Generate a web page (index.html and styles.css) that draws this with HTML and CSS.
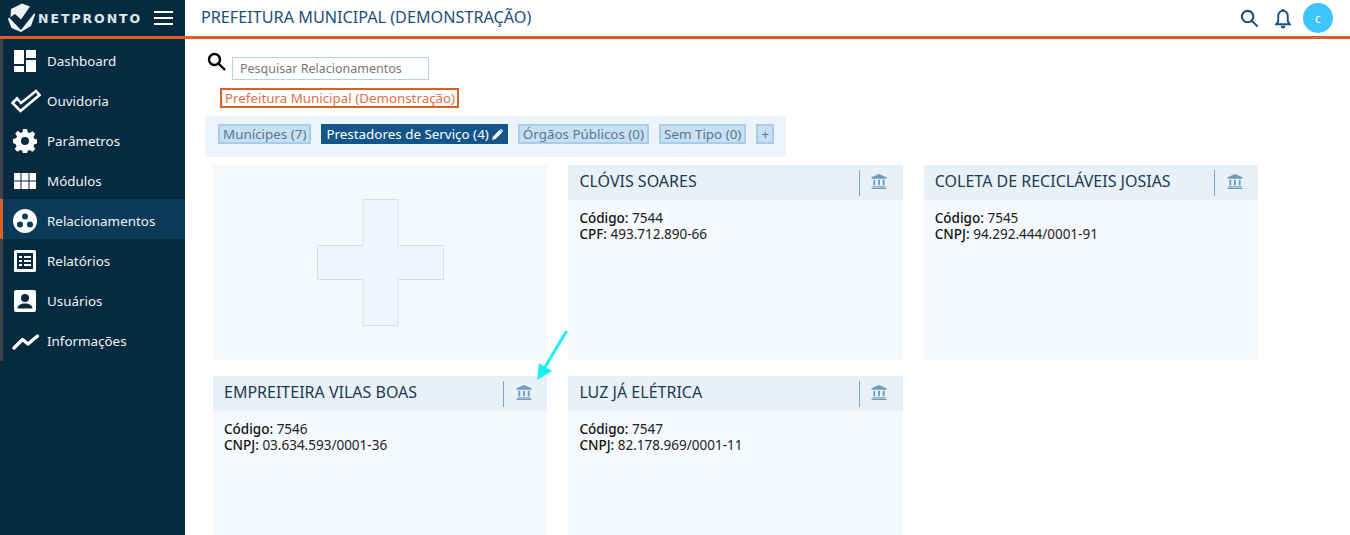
FILE: index.html
```html
<!DOCTYPE html>
<html lang="pt-BR">
<head>
<meta charset="utf-8">
<title>Netpronto</title>
<link rel="stylesheet" href="styles.css">
</head>
<body>
<header class="topbar">
  <div class="brand">
    <svg class="logo" width="28" height="29" viewBox="0 0 28 29"><path d="M3 6 L14 0.500 L22 3.500 L13 16.500 L7 11 L2.500 14 Z" fill="#eef2f2"/><path d="M1 14.500 L13 27 L26.500 10 L27 12 L23 23 L13 29 L3.500 25 L0 16 Z" fill="#eef2f2"/></svg>
    <span class="wordmark">NETPRONTO</span>
    <span class="burger"><i></i><i></i><i></i></span>
  </div>
  <div class="topmain">
    <h1>PREFEITURA MUNICIPAL (DEMONSTRAÇÃO)</h1>
    <div class="tools">
      <svg class="tool-search" width="19" height="19" viewBox="0 0 20 20" fill="none" stroke="#1d4f7c" stroke-width="2.200"><circle cx="8" cy="8" r="6"/><path d="M12.500 12.500 L18.500 18.500"/></svg>
      <svg width="18" height="21" viewBox="0 0 18 22"><path d="M9 3 C5.500 3 4 6 4 9 V14 L2 17 H16 L14 14 V9 C14 6 12.500 3 9 3 Z" fill="none" stroke="#1d4f7c" stroke-width="2"/><path d="M7.500 3 a1.500 1.500 0 0 1 3 0 M7 19 h4 a2 2 0 0 1 -4 0" fill="#1d4f7c" stroke="#1d4f7c"/></svg>
      <span class="avatar">c</span>
    </div>
  </div>
</header>
<div class="layout">
  <nav class="sidebar">
    <ul class="menu">
      <li class="item"><svg class="ico" viewBox="0 0 24 24" fill="#fff"><path d="M1 1h10v14H1zM13 1h10v8H13zM13 11h10v12H13zM1 17h10v6H1z"/></svg>Dashboard</li>
      <li class="item"><svg class="ico wide" viewBox="0 0 30 24" fill="none" stroke="#fff" stroke-width="2.600"><path d="M1.500 14 L6 9.500 L10 14 L25 2 L28.500 6 L9.500 22 Z"/></svg>Ouvidoria</li>
      <li class="item"><svg class="ico" viewBox="0 0 24 24"><path fill="#fff" fill-rule="evenodd" d="M10 0h4l.7 3.200 2 .8 2.800-1.800 2.800 2.800-1.800 2.800.8 2 3.200.7v4l-3.200.7-.8 2 1.800 2.800-2.800 2.800-2.800-1.800-2 .8-.7 3.200h-4l-.7-3.200-2-.8-2.800 1.800-2.800-2.800 1.800-2.800-.8-2L0 14v-4l3.200-.7.8-2L2.200 4.500 5 1.700 7.500 4l2-.8zM12 8a4 4 0 1 0 0 8 4 4 0 0 0 0-8z"/></svg>Parâmetros</li>
      <li class="item"><svg class="ico" viewBox="0 0 24 24" fill="#fff"><path d="M1 4h6.500v7.500H1zM8.500 4h7v7.500h-7zM16.500 4H23v7.500h-6.500zM1 12.500h6.500V20H1zM8.500 12.500h7V20h-7zM16.500 12.500H23V20h-6.500z"/></svg>Módulos</li>
      <li class="item active"><svg class="ico" viewBox="0 0 24 24"><circle cx="12" cy="12" r="12" fill="#fff"/><circle cx="12" cy="7.500" r="3" fill="#0a3a58"/><circle cx="7" cy="15.500" r="3" fill="#0a3a58"/><circle cx="17" cy="15.500" r="3" fill="#0a3a58"/></svg>Relacionamentos</li>
      <li class="item"><svg class="ico" viewBox="0 0 24 24"><rect x="1" y="1" width="22" height="22" rx="1.500" fill="#fff"/><path fill="#062a40" d="M4 4h16v16H4z"/><path fill="#fff" d="M6 7h3v2H6zM11 7h7v2h-7zM6 11h3v2H6zM11 11h7v2h-7zM6 15h3v2H6zM11 15h7v2h-7z"/></svg>Relatórios</li>
      <li class="item"><svg class="ico" viewBox="0 0 24 24"><rect x="1" y="1" width="22" height="22" rx="2" fill="#fff"/><circle cx="12" cy="9" r="4" fill="#062a40"/><path fill="#062a40" d="M4.500 19.500c0-3.500 3.500-5 7.500-5s7.500 1.500 7.500 5z"/></svg>Usuários</li>
      <li class="item"><svg class="ico wide" viewBox="0 0 30 24" fill="none" stroke="#fff" stroke-width="3.400" stroke-linecap="round" stroke-linejoin="round"><path d="M3 19 L11.500 10.500 L17 15 L26.500 7"/></svg>Informações</li>
    </ul>
  </nav>
  <main class="content">
    <div class="search">
      <svg width="20" height="20" viewBox="0 0 20 20" fill="none" stroke="#000" stroke-width="2.400"><circle cx="7.500" cy="7.500" r="5.500"/><path d="M11.500 11.500 L18 18"/></svg>
      <div class="search-input">Pesquisar Relacionamentos</div>
    </div>
    <div class="crumb">Prefeitura Municipal (Demonstração)</div>
    <div class="tabs">
      <span class="tab">Munícipes (7)</span>
      <span class="tab current">Prestadores de Serviço (4)<svg width="11" height="11" viewBox="0 0 11 11"><path fill="#fff" d="M0 11 L1 7.500 L7.500 1 L10 3.500 L3.500 10 Z M8.200.4 a1 1 0 0 1 1.300 0 l1.100 1.100 a1 1 0 0 1 0 1.300 l-.3.300 -2.400-2.400z"/></svg></span>
      <span class="tab">Órgãos Públicos (0)</span>
      <span class="tab">Sem Tipo (0)</span>
      <span class="tab plus">+</span>
    </div>
    <div class="grid">
      <div class="card add"><svg width="127" height="127" viewBox="0 0 127 127"><path d="M46 .5 H81 V46.500 H126.500 V80.500 H81 V126.500 H46 V80.500 H.5 V46.500 H46 Z" fill="#f0f5fc" stroke="#d3e0ec"/></svg></div>
      <article class="card">
        <div class="card-head"><h2>CLÓVIS SOARES</h2><span class="bank"><svg width="16" height="15" viewBox="0 0 16 16" fill="#6f9bbd"><path d="M8 0 L16 3.500 V5 H0 V3.500 Z M2 6 H4 V12 H2 Z M7 6 H9 V12 H7 Z M12 6 H14 V12 H12 Z M1 13 H15 V14.500 H1 Z M0 15 H16 V16 H0 Z"/></svg></span></div>
        <div class="card-body"><b>Código:</b> 7544<br><b>CPF:</b> 493.712.890-66</div>
      </article>
      <article class="card">
        <div class="card-head"><h2>COLETA DE RECICLÁVEIS JOSIAS</h2><span class="bank"><svg width="16" height="15" viewBox="0 0 16 16" fill="#6f9bbd"><path d="M8 0 L16 3.500 V5 H0 V3.500 Z M2 6 H4 V12 H2 Z M7 6 H9 V12 H7 Z M12 6 H14 V12 H12 Z M1 13 H15 V14.500 H1 Z M0 15 H16 V16 H0 Z"/></svg></span></div>
        <div class="card-body"><b>Código:</b> 7545<br><b>CNPJ:</b> 94.292.444/0001-91</div>
      </article>
      <article class="card">
        <div class="card-head"><h2>EMPREITEIRA VILAS BOAS</h2><span class="bank"><svg width="16" height="15" viewBox="0 0 16 16" fill="#6f9bbd"><path d="M8 0 L16 3.500 V5 H0 V3.500 Z M2 6 H4 V12 H2 Z M7 6 H9 V12 H7 Z M12 6 H14 V12 H12 Z M1 13 H15 V14.500 H1 Z M0 15 H16 V16 H0 Z"/></svg></span></div>
        <div class="card-body"><b>Código:</b> 7546<br><b>CNPJ:</b> 03.634.593/0001-36</div>
      </article>
      <article class="card">
        <div class="card-head"><h2>LUZ JÁ ELÉTRICA</h2><span class="bank"><svg width="16" height="15" viewBox="0 0 16 16" fill="#6f9bbd"><path d="M8 0 L16 3.500 V5 H0 V3.500 Z M2 6 H4 V12 H2 Z M7 6 H9 V12 H7 Z M12 6 H14 V12 H12 Z M1 13 H15 V14.500 H1 Z M0 15 H16 V16 H0 Z"/></svg></span></div>
        <div class="card-body"><b>Código:</b> 7547<br><b>CNPJ:</b> 82.178.969/0001-11</div>
      </article>
    </div>
    <svg class="arrow" width="36" height="52" viewBox="0 0 36 52"><path d="M32 2 L11 37" stroke="#1cf0f4" stroke-width="3" stroke-linecap="round"/><path d="M3 50 L5 33 L18 41 Z" fill="#1cf0f4"/></svg>
  </main>
</div>
</body>
</html>
```
FILE: styles.css
```css
* { box-sizing: border-box; }
html, body { margin: 0; height: 100%; }
body {
  height: 535px;
  overflow: hidden;
  font-family: "Noto Sans", "Open Sans", sans-serif;
  font-size: 14px;
  color: #14283a;
  background: #fff;
  display: flex;
  flex-direction: column;
}
.topbar {
  flex: 0 0 39px;
  display: flex;
  border-bottom: 3px solid #d9602a;
}
.brand {
  width: 185px;
  background: #062a40;
  display: flex;
  align-items: center;
  padding-left: 8px;
}
.logo { flex: none; margin-top: -1px; }
.wordmark {
  margin-left: 2px;
  color: #dfe8e8;
  font: bold 12.500px "DejaVu Sans", sans-serif;
  letter-spacing: 1.950px;
  white-space: nowrap;
  width: 108px;
}
.burger { display: flex; flex-direction: column; gap: 4px; width: 19px; margin-left: 8px; }
.burger i { display: block; height: 2px; background: #fff; }
.topmain {
  flex: 1;
  display: flex;
  align-items: center;
  justify-content: space-between;
  padding: 0 17px 0 16px;
}
h1 { margin: 0 0 2px; font-size: 16.200px; font-weight: 400; color: #1d4f7c; }
.tools { display: flex; align-items: center; gap: 11px; }
.tool-search { margin-right: 4px; }
.avatar {
  width: 30px; height: 30px; border-radius: 50%;
  background: #3cc6fb; color: #fff; font-size: 12px;
  display: flex; align-items: center; justify-content: center;
}
.layout { flex: 1; display: flex; min-height: 0; }
.sidebar { width: 185px; background: #062a40; }
.menu {
  list-style: none; margin: 0; padding: 2px 0 0;
  border-left: 3px solid #3a4449;
}
.item {
  height: 40px;
  display: flex;
  align-items: center;
  gap: 10px;
  padding-left: 10px;
  color: #f0f4f6;
  font-size: 13.400px;
}
.item.active {
  background: #0a3a58;
  margin: -2px 0 2px -3px;
  border-left: 3px solid #d9602a;
  padding-top: 3px;
}
.ico { width: 24px; height: 24px; flex: none; }
.ico.wide { width: 30px; margin-left: -2px; margin-right: -4px; }
.content { position: relative; flex: 1; padding: 13px 0 0 20px; min-width: 0; }
.search { display: flex; align-items: flex-start; gap: 5px; padding-left: 2px; }
.search-input {
  margin-top: 5px;
  width: 197px; height: 23px;
  border: 1px solid #b7d2e0;
  padding-left: 7px;
  color: #777;
  font-size: 12.500px;
  line-height: 21px;
  white-space: nowrap;
}
.crumb {
  margin: 8px 0 0 15px;
  width: 239px; height: 20px;
  border: 2px solid #d9602a;
  color: #e0704a;
  font-size: 13.350px;
  line-height: 16px;
  padding-left: 3px;
  white-space: nowrap;
}
.tabs {
  margin-top: 8px;
  width: 581px; height: 41px;
  background: #edf3fa;
  display: flex;
  align-items: center;
  gap: 10px;
  padding: 0 0 5px 13px;
}
.tab {
  height: 20px;
  background: #c9e0f3;
  border: 2px solid #a9cce8;
  color: #55778f;
  font-size: 13.400px;
  line-height: 16px;
  padding: 0 3px;
  white-space: nowrap;
}
.tab.current { background: #14558a; border-color: #14558a; color: #fff; display: flex; align-items: center; gap: 3px; }
.tab.plus { padding: 0 3px; }
.grid {
  margin: 8px 0 0 8px;
  display: grid;
  grid-template-columns: repeat(3, 334.400px);
  grid-template-rows: 195px 159px;
  column-gap: 21px;
  row-gap: 16px;
}
.card { background: #f5f9fd; }
.card-head {
  height: 35px;
  background: #e9f1f8;
  display: flex;
  align-items: center;
  justify-content: space-between;
  padding-left: 11px;
}
h2 { margin: 0 0 3px; font-size: 16px; font-weight: 400; color: #1c3a52; white-space: nowrap; }
.bank {
  width: 44px; height: 26px;
  border-left: 1px solid #7fa4c0;
  display: flex; align-items: center; justify-content: center;
  padding: 0 4px 2px 0;
}
.card-body { padding: 10px 11px 0; font-size: 13.500px; line-height: 16px; color: #222; }
.card-body b { font-weight: 500; color: #111; }
.add { display: flex; align-items: center; justify-content: center; }
.arrow { position: absolute; left: 349px; top: 291px; }
```
